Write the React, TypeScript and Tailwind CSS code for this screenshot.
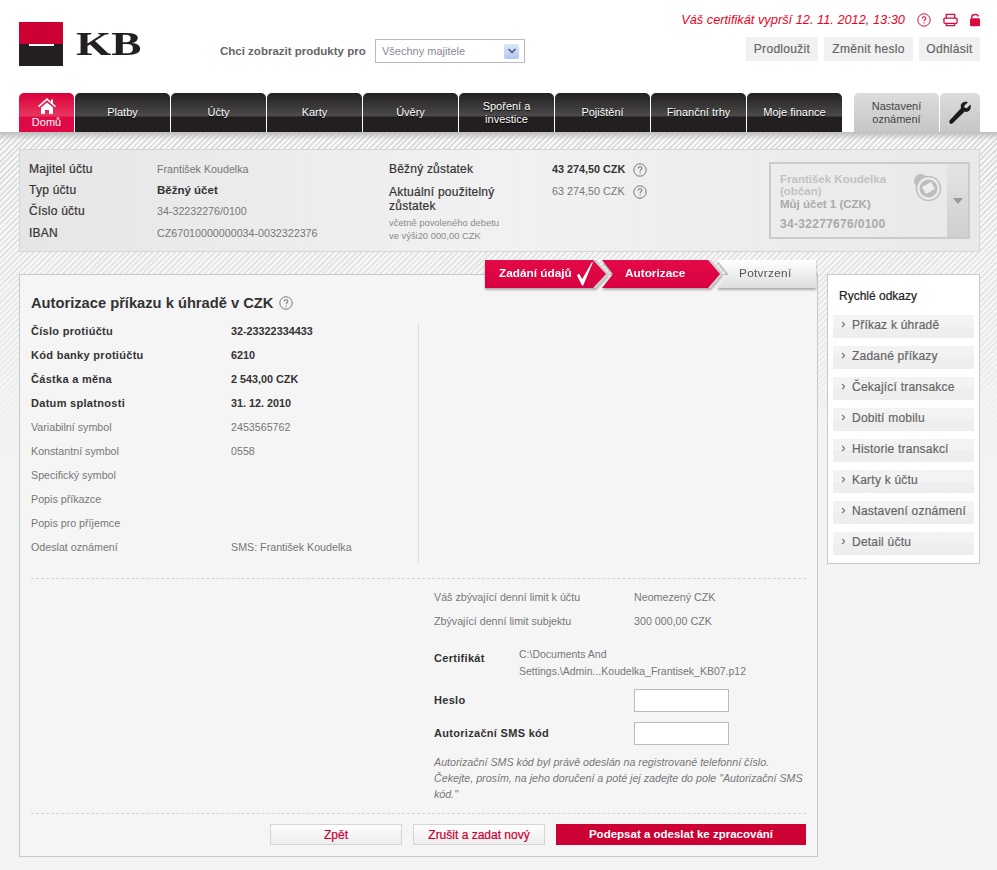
import { ChevronDown, ChevronRight } from "lucide-react";

const tabs = ["Platby", "Účty", "Karty", "Úvěry", "Spoření a investice", "Pojištění", "Finanční trhy", "Moje finance"];
const quickLinks = ["Příkaz k úhradě", "Zadané příkazy", "Čekající transakce", "Dobití mobilu", "Historie transakcí", "Karty k účtu", "Nastavení oznámení", "Detail účtu"];
const strongRows = [
    ["Číslo protiúčtu", "32-23322334433"],
    ["Kód banky protiúčtu", "6210"],
    ["Částka a měna", "2 543,00 CZK"],
    ["Datum splatnosti", "31. 12. 2010"],
];
const plainRows = [
    ["Variabilní symbol", "2453565762"],
    ["Konstantní symbol", "0558"],
    ["Specifický symbol", ""],
    ["Popis příkazce", ""],
    ["Popis pro příjemce", ""],
    ["Odeslat oznámení", "SMS: František Koudelka"],
];
const ownerRows = [
    ["Majitel účtu", "František Koudelka", "text-[10.7px] text-[#777]"],
    ["Typ účtu", "Běžný účet", "text-[11.5px] text-[#333] font-bold"],
    ["Číslo účtu", "34-32232276/0100", "text-[10.7px] text-[#777]"],
    ["IBAN", "CZ67010000000034-0032322376", "text-[10.7px] text-[#777]"],
];

function HelpIcon({ className }: { className: string }) {
    return (
        <svg viewBox="0 0 14 14" className={className} fill="none" stroke="currentColor">
            <circle cx="7" cy="7" r="6.2" strokeWidth="1" />
            <path d="M5.2 5.5c0-1.1.8-1.8 1.9-1.8s1.8.7 1.8 1.6c0 1.3-1.8 1.4-1.8 2.9" strokeWidth="1.1" />
            <path d="M7.1 9.4v1.2" strokeWidth="1.2" />
        </svg>
    );
}

function Logo() {
    return (
        <div className="flex items-center">
            <div className="w-[44px] h-[44px] flex flex-col relative">
                <div className="h-[22px] bg-[#cc0033]" />
                <div className="h-[22px] bg-[#231f20]" />
                <div className="absolute left-[10px] top-[22px] w-[25px] h-[2px] bg-white" />
            </div>
            <span className="ml-[13px] text-[34px] leading-none font-bold text-[#231f20] font-['Liberation_Serif',serif] origin-left scale-x-[1.33]">
                KB
            </span>
        </div>
    );
}

function Header() {
    return (
        <div className="h-[93px] flex bg-white">
            <div className="pl-[19px] pt-[22px] w-[220px]">
                <Logo />
            </div>
            <div className="pt-[39px] flex items-start">
                <span className="w-[155px] h-[24px] leading-[24px] text-[11.5px] font-bold text-[#666]">
                    Chci zobrazit produkty pro
                </span>
                <div className="w-[150px] h-[24px] border border-[#bbb] flex items-center justify-between pl-[6px] pr-[5px] text-[11px] text-[#8a8a94]">
                    <span>Všechny majitele</span>
                    <div className="w-[15px] h-[15px] bg-[linear-gradient(#dbe6fb,#b2c6ee)] rounded-[2px] flex items-center justify-center">
                        <ChevronDown size={12} strokeWidth={3.5} className="text-[#4b5f87]" />
                    </div>
                </div>
            </div>
            <div className="flex-1 flex flex-col items-end pr-[17px] pt-[10px]">
                <div className="h-[19px] flex items-center">
                    <span className="text-[12.8px] italic text-[#ee0022]">Váš certifikát vyprší 12. 11. 2012, 13:30</span>
                    <HelpIcon className="ml-[12px] w-[14px] h-[14px] text-[#dc0a3c]" />
                    <svg viewBox="0 0 16 14" className="ml-[12px] w-[15px] h-[14px] text-[#dc0a3c]" fill="none" stroke="currentColor" strokeWidth="1.4">
                        <path d="M3.5 5V1h9v4" />
                        <rect x="1" y="5" width="14" height="5.5" rx="1" />
                        <path d="M3.5 10.5V13h9v-2.5" />
                    </svg>
                    <svg viewBox="0 0 11 14" className="ml-[12px] w-[10px] h-[14px] text-[#dc0a3c]" fill="none">
                        <path d="M2 5V3.4C2 1.9 3.4.9 5.5.9s3.5 1 3.5 2.2" stroke="currentColor" strokeWidth="1.6" />
                        <rect x="0" y="5" width="11" height="9" rx="1.5" fill="currentColor" />
                    </svg>
                </div>
                <div className="mt-[8px] flex gap-[6px] text-[12px] tracking-[0.3px] text-[#666] [-webkit-text-stroke:0.2px]">
                    <span className="w-[72px] h-[24px] leading-[24px] text-center bg-[#f1f1f1]">Prodloužit</span>
                    <span className="w-[89px] h-[24px] leading-[24px] text-center bg-[#f1f1f1]">Změnit heslo</span>
                    <span className="w-[61px] h-[24px] leading-[24px] text-center bg-[#f1f1f1]">Odhlásit</span>
                </div>
            </div>
        </div>
    );
}

function Nav() {
    return (
        <div className="h-[39px] flex bg-white pl-[19px] text-[11px] text-center">
            <div className="w-[55px] mr-[1px] rounded-t-[5px] bg-[linear-gradient(#d9003c_0,#e8365f_23px,#df0a45_24px,#df0a45_100%)] text-white flex flex-col items-center pt-[5px]">
                <svg viewBox="0 0 18 16" className="w-[18px] h-[16px]" fill="white">
                    <path d="M9 0 0 8l1 1.2L9 2.2l8 7L18 8l-3-2.6V1.5h-2v2.2Z" />
                    <path d="M3 9.6 9 4.4l6 5.2V16h-4v-4H7v4H3Z" />
                </svg>
                <span className="leading-[14px] mt-[1px]">Domů</span>
            </div>
            {tabs.map((tab) => (
                <div
                    key={tab}
                    className="w-[95px] mr-[1px] rounded-t-[5px] bg-[linear-gradient(#221f20_0,#4c4a4b_23px,#231f20_24px,#231f20_100%)] text-white flex items-center justify-center leading-[13px] px-[14px] [text-shadow:0_1px_1px_#000]"
                >
                    {tab}
                </div>
            ))}
            <div className="w-[85px] ml-[11px] mr-[1px] rounded-t-[5px] bg-[linear-gradient(#dcdcdc,#c6c6c6)] text-[#444] flex items-center justify-center leading-[13px]">
                Nastavení oznámení
            </div>
            <div className="w-[40px] rounded-t-[5px] bg-[linear-gradient(#dcdcdc,#c6c6c6)] flex items-center justify-center">
                <svg viewBox="0 0 24 24" className="w-[24px] h-[24px]" fill="#1c1a1b">
                    <path d="M22.5 3.6 18.7 7.2l-2-.4-.5-2L20 1.2c-2.6-1-5.300-.3-6.500 1.500-1 1.500-1 3-.4 4.400L1.600 19.600a2 2 0 0 0 2.800 2.800L16.700 10.600c1.500.6 3.200.3 4.500-.8 1.500-1.400 2-3.900 1.300-6.200Z" />
                </svg>
            </div>
        </div>
    );
}

function AccountPanel() {
    return (
        <div className="h-[103px] flex border border-[#d6d6d6] bg-[linear-gradient(90deg,#e6e6e6,#f1f1f1_50%,#e9e9e9)] pl-[9px] text-[12px]">
            <div className="w-[360px] pt-[9px]">
                {ownerRows.map(([label, value, valueClass]) => (
                    <div key={label} className="flex h-[21px] leading-[21px] last:mt-[1px]">
                        <span className="w-[128px] tracking-[0.25px] text-[#333] [-webkit-text-stroke:0.2px]">{label}</span>
                        <span className={valueClass}>{value}</span>
                    </div>
                ))}
            </div>
            <div className="w-[163px] pt-[9px]">
                <div className="h-[21px] leading-[21px] tracking-[0.2px] text-[#333] [-webkit-text-stroke:0.2px]">Běžný zůstatek</div>
                <div className="mt-[5px] w-[120px] leading-[14px] tracking-[0.25px] text-[#333] [-webkit-text-stroke:0.2px]">
                    Aktuální použitelný zůstatek
                </div>
                <div className="mt-[3px] leading-[13px] text-[9.4px] text-[#8a8a8a]">
                    včetně povoleného debetu
                    <br />
                    ve výši20 000,00 CZK
                </div>
            </div>
            <div className="w-[217px] pt-[9px] text-[10.8px]">
                <div className="h-[21px] flex items-center font-bold text-[#333]">
                    43 274,50 CZK
                    <HelpIcon className="ml-[8px] w-[14px] h-[14px] font-normal text-[#777]" />
                </div>
                <div className="mt-[1px] h-[21px] flex items-center text-[#777]">
                    63 274,50 CZK
                    <HelpIcon className="ml-[8px] w-[14px] h-[14px] text-[#777]" />
                </div>
            </div>
            <div className="mt-[12px] w-[201px] h-[77px] border-2 border-[#cbcbcb] flex">
                <div className="flex-1 pl-[9px] pt-[9px] relative font-bold text-[11.5px] text-[#c2c2c2]">
                    <div className="w-[125px] leading-[12px]">František Koudelka (občan)</div>
                    <div className="leading-[14px] text-[#aaa]">Můj účet 1 (CZK)</div>
                    <div className="leading-[14px] mt-[6px] text-[12px] tracking-[0.3px] text-[#aaa]">34-32277676/0100</div>
                    <svg viewBox="0 0 28 28" className="absolute right-[6px] top-[9px] w-[28px] h-[28px]">
                        <circle cx="8" cy="8" r="7" fill="#bdbdbd" />
                        <circle cx="15.500" cy="15.500" r="12" fill="#ececec" stroke="#bdbdbd" strokeWidth="1.500" />
                        <circle cx="15.500" cy="15.500" r="9" fill="#bdbdbd" />
                        <path d="M9 14 18 9l4 7-9 5Z" fill="#eee" />
                    </svg>
                </div>
                <div className="w-[21px] bg-[linear-gradient(#e4e4e4,#cfcfcf)] flex items-center justify-center">
                    <div className="w-0 h-0 border-x-[5px] border-x-transparent border-t-[6px] border-t-[#999]" />
                </div>
            </div>
        </div>
    );
}

function Stepper() {
    return (
        <div className="absolute left-[465px] top-[-15px] flex text-[11.8px] font-bold">
            <div className="[filter:drop-shadow(3px_0_0_#cfcfcf)_drop-shadow(0_2px_1px_rgba(0,0,0,0.3))] z-20">
                <div className="w-[121px] h-[28px] pl-[14px] flex items-center text-white bg-[linear-gradient(#e30b46,#d80040)] [clip-path:polygon(0_0,108px_0,121px_50%,108px_100%,0_100%)]">
                    Zadání údajů
                    <svg viewBox="0 0 16 24" className="ml-[5px] w-[16px] h-[24px]" fill="white">
                        <path d="M0 13.500 2 11.500 5.200 17 15 0h1L6.200 23.500H5Z" />
                    </svg>
                </div>
            </div>
            <div className="[filter:drop-shadow(3px_0_0_#cfcfcf)_drop-shadow(0_2px_1px_rgba(0,0,0,0.3))] z-10 ml-[-4px]">
                <div className="w-[118px] h-[28px] pl-[23px] flex items-center text-white bg-[linear-gradient(#e30b46,#d80040)] [clip-path:polygon(0_0,106px_0,118px_50%,106px_100%,0_100%,11px_50%)]">
                    Autorizace
                </div>
            </div>
            <div className="[filter:drop-shadow(0_2px_1px_rgba(0,0,0,0.3))] ml-[-3px]">
                <div className="w-[99px] h-[28px] pl-[22px] flex items-center font-normal tracking-[0.3px] text-[#555] bg-[linear-gradient(#ffffff,#dedede)] [clip-path:polygon(0_0,100%_0,100%_100%,0_100%,11px_50%)]">
                    Potvrzení
                </div>
            </div>
        </div>
    );
}

function MainCard() {
    return (
        <div className="relative w-[799px] h-[583px] border border-[#c8c8c8] bg-[#f5f5f5] px-[11px] pt-[18px] text-[10.7px]">
            <Stepper />
            <div className="h-[20px] flex items-center text-[14.7px] font-bold text-[#333]">
                Autorizace příkazu k úhradě v CZK
                <HelpIcon className="ml-[6px] w-[14px] h-[14px] font-normal text-[#777]" />
            </div>
            <div className="mt-[10px] w-[388px] h-[240px] flex flex-col border-r border-[#dcdcdc]">
                <div className="mt-[-4px]">
                    {strongRows.map(([label, value]) => (
                        <div key={label} className="flex h-[24px] leading-[24px] font-bold text-[#333]">
                            <span className="w-[200px] text-[11px] tracking-[0.3px]">{label}</span>
                            <span className="text-[10.8px]">{value}</span>
                        </div>
                    ))}
                    {plainRows.map(([label, value]) => (
                        <div key={label} className="flex h-[24px] leading-[24px] text-[#777]">
                            <span className="w-[200px]">{label}</span>
                            <span>{value}</span>
                        </div>
                    ))}
                </div>
            </div>
            <div className="mt-[15px] border-t border-dashed border-[#d4d4d4]" />
            <div className="mt-[6px] pl-[403px]">
                <div className="flex h-[24px] leading-[24px] text-[#777]">
                    <span className="w-[200px]">Váš zbývající denní limit k účtu</span>
                    <span>Neomezený CZK</span>
                </div>
                <div className="flex h-[24px] leading-[24px] text-[#777]">
                    <span className="w-[200px]">Zbývající denní limit subjektu</span>
                    <span>300 000,00 CZK</span>
                </div>
                <div className="mt-[13px] flex h-[34px]">
                    <span className="w-[85px] leading-[24px] text-[11px] tracking-[0.3px] font-bold text-[#333]">Certifikát</span>
                    <span className="text-[10.5px] leading-[17px] text-[#777]">
                        C:\Documents And
                        <br />
                        Settings.\Admin...Koudelka_Frantisek_KB07.p12
                    </span>
                </div>
                <div className="mt-[9px] flex h-[23px] items-center">
                    <span className="w-[200px] text-[11px] tracking-[0.3px] font-bold text-[#333]">Heslo</span>
                    <input className="w-[95px] h-[23px] border border-[#bbb] bg-white" />
                </div>
                <div className="mt-[10px] flex h-[23px] items-center">
                    <span className="w-[200px] text-[11px] tracking-[0.3px] font-bold text-[#333]">Autorizační SMS kód</span>
                    <input className="w-[95px] h-[23px] border border-[#bbb] bg-white" />
                </div>
                <p className="mt-[9px] text-[10.7px] leading-[16px] italic text-[#777] w-[372px]">
                    Autorizační SMS kód byl právě odeslán na registrované telefonní číslo. Čekejte, prosím, na jeho doručení a poté jej zadejte do pole "Autorizační SMS kód."
                </p>
            </div>
            <div className="mt-[11px] border-t border-dashed border-[#d4d4d4]" />
            <div className="mt-[10px] flex justify-end gap-[11px]">
                <button className="w-[132px] h-[21px] border border-[#d4d4d4] bg-[linear-gradient(#ffffff,#ececec)] text-[#cc0033] text-[12px] [-webkit-text-stroke:0.2px]">Zpět</button>
                <button className="w-[132px] h-[21px] border border-[#d4d4d4] bg-[linear-gradient(#ffffff,#ececec)] text-[#cc0033] text-[12px] [-webkit-text-stroke:0.2px]">Zrušit a zadat nový</button>
                <button className="w-[250px] h-[21px] bg-[#cc0033] text-white font-bold text-[11.5px]">Podepsat a odeslat ke zpracování</button>
            </div>
        </div>
    );
}

function QuickLinks() {
    return (
        <div className="w-[153px] h-[290px] ml-[9px] border border-[#c8c8c8] bg-white px-[5px] text-[12px]">
            <div className="h-[40px] pt-[13px] pl-[6px] leading-[16px] text-[#222] [-webkit-text-stroke:0.2px]">Rychlé odkazy</div>
            {quickLinks.map((link) => (
                <div key={link} className="h-[23px] mb-[8px] flex items-start pl-[6px] pt-[3px] leading-[14px] tracking-[0.22px] text-[#666] bg-[linear-gradient(#f3f3f3_0,#f3f3f3_50%,#eeeeee_50%,#eeeeee_100%)] [-webkit-text-stroke:0.2px]">
                    <ChevronRight size={9} strokeWidth={3} className="mt-[2px] text-[#777]" />
                    <span className="ml-[4px]">{link}</span>
                </div>
            ))}
        </div>
    );
}

export default function App() {
    return (
        <div className="w-[997px] min-h-[870px] bg-[#f3f3f3] font-['Liberation_Sans',Arial,sans-serif]">
            <Header />
            <Nav />
            <div className="pl-[19px] pr-[17px] pt-[17px] pb-[13px] bg-no-repeat bg-[length:100%_8px,100%_328px,100%_328px] bg-[linear-gradient(#bdbdbd,#bdbdbd00),linear-gradient(#f3f3f300,#f3f3f3),repeating-linear-gradient(135deg,#dcdcdc_0,#dcdcdc_2px,#fafafa_2px,#fafafa_4px)]">
                <AccountPanel />
                <div className="mt-[22px] flex items-start">
                    <MainCard />
                    <QuickLinks />
                </div>
            </div>
        </div>
    );
}
